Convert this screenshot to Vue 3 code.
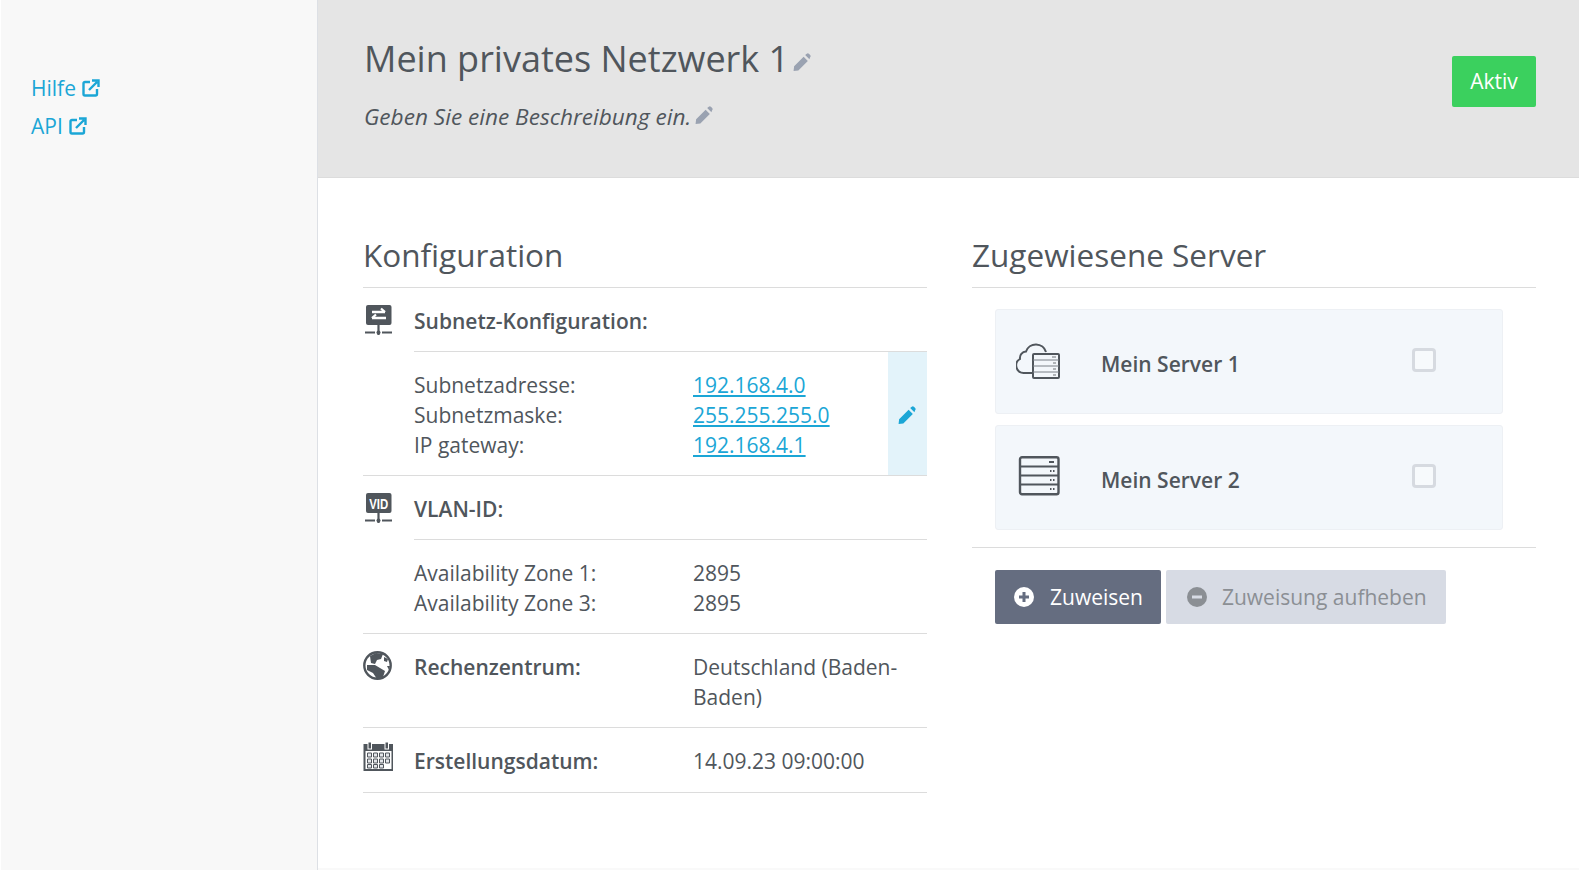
<script setup>
const servers = [
  { name: 'Mein Server 1', cloud: true },
  { name: 'Mein Server 2', cloud: false }
]
</script>

<template>
  <div class="page">
    <aside class="sidebar">
      <a class="side-link">Hilfe <svg class="ext" viewBox="0 0 18 18"><path d="M8 3H3A1.500 1.500 0 0 0 1.500 4.500v10.500A1.500 1.500 0 0 0 3 16.500h10.500a1.500 1.500 0 0 0 1.500-1.500V10" fill="none" stroke="#1ba6d6" stroke-width="2.400"/><path d="M7 11 15 3M10 1.500h6.500V8" fill="none" stroke="#1ba6d6" stroke-width="2.400"/></svg></a>
      <a class="side-link">API <svg class="ext" viewBox="0 0 18 18"><path d="M8 3H3A1.500 1.500 0 0 0 1.500 4.500v10.500A1.500 1.500 0 0 0 3 16.500h10.500a1.500 1.500 0 0 0 1.500-1.500V10" fill="none" stroke="#1ba6d6" stroke-width="2.400"/><path d="M7 11 15 3M10 1.500h6.500V8" fill="none" stroke="#1ba6d6" stroke-width="2.400"/></svg></a>
    </aside>
    <main class="main">
      <header class="head">
        <div class="head-text">
          <h1>Mein privates Netzwerk 1<svg class="pen" viewBox="0 0 18 18"><path d="M11 3.500 15 7.500 6 16.500 1.500 17 2 12.500Z M12.500 2 14 .8a1.500 1.500 0 0 1 2 0l1.200 1.200a1.500 1.500 0 0 1 0 2L16.500 6Z" fill="#9aa2b1"/></svg></h1>
          <p class="desc">Geben Sie eine Beschreibung ein.<svg class="pen" viewBox="0 0 18 18"><path d="M11 3.500 15 7.500 6 16.500 1.500 17 2 12.500Z M12.500 2 14 .8a1.500 1.500 0 0 1 2 0l1.200 1.200a1.500 1.500 0 0 1 0 2L16.500 6Z" fill="#9aa2b1"/></svg></p>
        </div>
        <div class="status">Aktiv</div>
      </header>
      <div class="columns">
        <section class="col">
          <h2>Konfiguration</h2>
          <div class="row row-title">
            <svg class="ico" viewBox="0 0 30 30"><rect x="3" y="0" width="25.500" height="20" rx="2" fill="#50565c"/><path d="M9 7h13M18 3.500l4 3.500M23 13H9M13 9.500l-4 3.500" stroke="#fff" stroke-width="2.300" fill="none"/><path d="M2 27.500h10M19 27.500h10M15.500 20v10" stroke="#50565c" stroke-width="2.200"/><circle cx="15.500" cy="27.500" r="2" fill="#50565c"/></svg>
            <strong>Subnetz-Konfiguration:</strong>
          </div>
          <div class="sub sub-edit">
            <dl class="pairs">
              <div><dt>Subnetzadresse:</dt><dd><a>192.168.4.0</a></dd></div>
              <div><dt>Subnetzmaske:</dt><dd><a>255.255.255.0</a></dd></div>
              <div><dt>IP gateway:</dt><dd><a>192.168.4.1</a></dd></div>
            </dl>
            <div class="edit"><svg viewBox="0 0 18 18" width="19" height="19"><path d="M11 3.500 15 7.500 6 16.500 1.500 17 2 12.500Z M12.500 2 14 .8a1.500 1.500 0 0 1 2 0l1.200 1.200a1.500 1.500 0 0 1 0 2L16.500 6Z" fill="#1ba6d6"/></svg></div>
          </div>
          <div class="row row-title">
            <svg class="ico" viewBox="0 0 30 30"><rect x="3" y="0" width="25.500" height="20" rx="2" fill="#50565c"/><text x="15.700" y="15.500" text-anchor="middle" textLength="19" lengthAdjust="spacingAndGlyphs" class="vid">VID</text><path d="M2 27.500h10M19 27.500h10M15.500 20v10" stroke="#50565c" stroke-width="2.200"/><circle cx="15.500" cy="27.500" r="2" fill="#50565c"/></svg>
            <strong>VLAN-ID:</strong>
          </div>
          <div class="sub">
            <dl class="pairs">
              <div><dt>Availability Zone 1:</dt><dd>2895</dd></div>
              <div><dt>Availability Zone 3:</dt><dd>2895</dd></div>
            </dl>
          </div>
          <div class="row row-info">
            <svg class="ico" viewBox="0 0 30 30"><circle cx="14.500" cy="14.500" r="13.200" fill="#fff" stroke="#50565c" stroke-width="2.400"/><path d="M7 5 13 2 20 3 18 8 14 9 12 13 8 12Z" fill="#50565c"/><path d="M4 14 12 14 17 17 22 20 20 26 14 28 10 22 4 19Z" fill="#50565c"/><path d="M21 6 25 8 24 11 21 10ZM24 15 27 15 26 19Z" fill="#50565c"/></svg>
            <strong>Rechenzentrum:</strong>
            <span class="val">Deutschland (Baden-Baden)</span>
          </div>
          <div class="row row-info row-date">
            <svg class="ico" viewBox="0 0 30 30"><path d="M.5 3h30v27H.5z" fill="#50565c"/><path d="M2.500 10h26v18h-26z" fill="#fff"/><rect x="5" y="1" width="3.500" height="7" fill="#50565c" stroke="#fff"/><rect x="22" y="1" width="3.500" height="7" fill="#50565c" stroke="#fff"/><path fill="#e4e6ea" stroke="#50565c" stroke-width="1" d="M4.500 12h4v4h-4zM10.500 12h4v4h-4zM16.500 12h4v4h-4zM22.500 12h4v4h-4zM4.500 18h4v4h-4zM10.500 18h4v4h-4zM16.500 18h4v4h-4zM22.500 18h4v4h-4zM4.500 23.500h4v3.500h-4zM10.500 23.500h4v3.500h-4zM16.500 23.500h4v3.500h-4z"/></svg>
            <strong>Erstellungsdatum:</strong>
            <span class="val">14.09.23 09:00:00</span>
          </div>
        </section>
        <section class="col">
          <h2>Zugewiesene Server</h2>
          <div class="cards">
            <div v-for="s in servers" :key="s.name" class="card">
              <svg v-if="s.cloud" class="srv" viewBox="0 0 46 40"><path d="M17 33H8A7.500 7.500 0 0 1 4 19 6.500 6.500 0 0 1 10 11.500 10.500 10.500 0 0 1 30 12" fill="none" stroke="#50565c" stroke-width="2"/><rect x="17" y="14" width="26" height="24" rx="1" fill="#f3f7fb" stroke="#50565c" stroke-width="2"/><path d="M17 20h26M17 26h26M17 32h26" stroke="#7a8087" stroke-width="1"/><path d="M36 17h4M37 23h3M37 29h3M37 35h3" stroke="#9a9ea3" stroke-width="1.500"/></svg>
              <svg v-else class="srv" viewBox="0 0 46 40"><rect x="4" y="1.200" width="38.500" height="37" rx="2" fill="#f3f7fb" stroke="#50565c" stroke-width="2.400"/><path d="M4 10.500h38M4 19.500h38M4 28.500h38" stroke="#50565c" stroke-width="2"/><path d="M33 6h5M34 15h1.500M37 15h1.500M34 24h1.500M37 24h1.500M34 33h1.500M37 33h1.500" stroke="#50565c" stroke-width="2"/></svg>
              <span class="srv-name">{{ s.name }}</span>
              <span class="check"></span>
            </div>
          </div>
          <div class="actions">
            <button class="btn primary"><svg viewBox="0 0 20 20" width="20" height="20"><circle cx="10" cy="10" r="10" fill="#fff"/><path d="M10 5v10M5 10h10" stroke="#656d80" stroke-width="3"/></svg>Zuweisen</button>
            <button class="btn disabled"><svg viewBox="0 0 20 20" width="20" height="20"><circle cx="10" cy="10" r="10" fill="#8b8f94"/><path d="M5 10h10" stroke="#d7dbe4" stroke-width="3"/></svg>Zuweisung aufheben</button>
          </div>
        </section>
      </div>
      <div class="foot"></div>
    </main>
  </div>
</template>

<style>
html, body { margin: 0; background: #fff; }
</style>

<style scoped>
.page {
  display: flex;
  height: 870px;
  overflow: hidden;
  font-family: "Open Sans", sans-serif;
  font-size: 21px;
  line-height: 30px;
  color: #50565c;
}
.sidebar {
  width: 316px;
  background: #f8f8f8;
  border-left: 1px solid #fff;
  border-right: 1px solid #dde0e5;
  padding-top: 73px;
  display: flex;
  flex-direction: column;
  align-items: flex-start;
  gap: 8px;
}
.side-link {
  margin-left: 30px;
  color: #1ba6d6;
  display: flex;
  align-items: center;
  gap: 6px;
}
.ext { width: 18px; height: 18px; }
.main { flex: 1; min-width: 0; display: flex; flex-direction: column; }
.foot { margin-top: auto; height: 2px; background: #f9f9f9; }
.head {
  height: 177px;
  flex: none;
  background: #e5e5e5;
  border-bottom: 1px solid #dcdcdc;
  display: flex;
  justify-content: space-between;
  align-items: flex-start;
  padding: 0 43px 0 46px;
}
h1 {
  margin: 34px 0 0;
  font-size: 36px;
  line-height: 50px;
  font-weight: 400;
}
.desc {
  margin: 18px 0 0;
  font-style: italic;
  font-size: 22.600px;
  line-height: 30px;
}
.pen { vertical-align: baseline; margin-left: 3px; width: 19px; height: 19px; }
.status {
  margin-top: 56px;
  width: 84px;
  height: 51px;
  background: #3bd05e;
  border-radius: 2px;
  color: #fff;
  font-size: 21px;
  line-height: 51px;
  text-align: center;
}
.columns {
  display: flex;
  gap: 45px;
  padding: 0 43px 0 45px;
}
.col { width: 564px; flex: none; }
h2 {
  margin: 0;
  padding-top: 55px;
  height: 54px;
  font-size: 31.500px;
  line-height: 44px;
  font-weight: 400;
  border-bottom: 1px solid #dcdcdc;
}
.row {
  display: flex;
  align-items: flex-start;
}
.row-title { height: 63px; }
.row strong { font-weight: 600; margin-left: 21px; padding-top: 18px; }
.ico { width: 30px; height: 30px; margin-top: 17px; flex: none; }
.sub {
  margin-left: 51px;
  border-top: 1px solid #dcdcdc;
  display: flex;
  height: 93px;
}
.sub-edit { height: 123px; }
.pairs {
  flex: 1;
  margin: 18px 0 0;
}
.pairs > div { display: flex; }
.pairs dt { width: 279px; }
.pairs dd { margin: 0; }
.pairs a { color: #1ba6d6; text-decoration: underline; }
.edit {
  width: 39px;
  box-sizing: border-box;
  padding: 3px 2px 0 0;
  background: #e3f3fa;
  display: flex;
  align-items: center;
  justify-content: center;
}
.sub + .row { border-top: 1px solid #dcdcdc; }
.row-info { height: 93px; }
.row-info strong { width: 279px; margin-left: 21px; padding-top: 18px; flex: none; }
.val { padding-top: 18px; width: 230px; }
.row-date { height: 64px; border-top: 1px solid #dcdcdc; border-bottom: 1px solid #dcdcdc; }
.row-date .ico { margin-top: 13px; }
.vid { font-family: "Liberation Sans", sans-serif; font-size: 15px; font-weight: 700; fill: #fff; }
.cards { padding: 21px 33px 0 23px; height: 238px; border-bottom: 1px solid #dcdcdc; }
.card {
  height: 105px;
  background: #f3f7fb;
  border: 1px solid #edf0f4;
  border-radius: 3px;
  box-sizing: border-box;
  margin-bottom: 11px;
  display: flex;
  align-items: center;
}
.srv { width: 46px; height: 40px; margin-left: 20px; margin-top: -3px; flex: none; }
.srv-name { margin-left: 39px; font-weight: 600; margin-top: 4px; width: 311px; }
.check {
  width: 24px;
  height: 24px;
  box-sizing: border-box;
  border: 3px solid #d6dae0;
  border-radius: 4px;
  background: #f7fafc;
  margin-top: -3px;
}
.actions { display: flex; gap: 5px; padding: 22px 0 0 23px; }
.btn {
  height: 54px;
  border: 0;
  border-radius: 2px;
  font: inherit;
  display: flex;
  align-items: center;
  gap: 16px;
  padding: 0 18px 0 19px;
}
.primary { background: #656d80; color: #fff; }
.disabled { background: #d7dbe4; color: #8b8f94; padding: 0 19px 0 21px; gap: 15px; }
</style>
